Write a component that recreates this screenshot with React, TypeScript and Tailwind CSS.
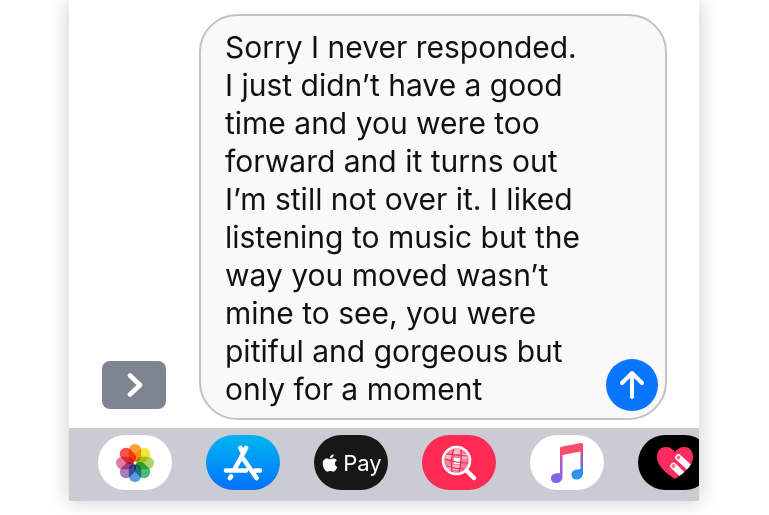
import { FaApple } from "react-icons/fa";

const message = [
  "Sorry I never responded.",
  "I just didn’t have a good",
  "time and you were too",
  "forward and it turns out",
  "I’m still not over it. I liked",
  "listening to music but the",
  "way you moved wasn’t",
  "mine to see, you were",
  "pitiful and gorgeous but",
  "only for a moment",
].join("\n");

const petals = ["#fba03a", "#f2e838", "#aed46a", "#4cbb7c", "#559fe0", "#ac7abf", "#e07ca6", "#fa5546"];

function PhotosIcon() {
  return (
    <svg width="40" height="40" viewBox="-20 -20 40 40" aria-hidden="true">
      {petals.map((fill, i) => (
        <rect
          key={fill}
          x="-6.2"
          y="-19"
          width="12.4"
          height="18"
          rx="6.2"
          fill={fill}
          transform={`rotate(${i * 45})`}
          className="mix-blend-multiply"
        />
      ))}
      <circle r="1.4" fill="white" />
    </svg>
  );
}

function AppStoreIcon() {
  return (
    <svg width="40" height="36" viewBox="0 0 40 36" fill="none" stroke="white" strokeWidth="4.6" strokeLinecap="round" aria-hidden="true">
      <path d="M17.500 3 20 8M23 3 12 23.500M3 25.500H23M32 25.500H37M20.500 14 33.500 33M8 31.500 7 33" />
    </svg>
  );
}

function ImageSearchIcon() {
  return (
    <svg width="36" height="36" viewBox="0 0 36 36" fill="none" aria-hidden="true">
      <circle cx="15.5" cy="15.5" r="12.5" fill="#ff7f98" />
      <path d="M12 4h7v5h-7zM5 9h6v5H5zM20 9h6v5h-6zM5 20h6v5H5zM12 20h7v5h-7z" fill="#ffb5c3" />
      <path d="M13 13h6v6h-6z" fill="white" />
      <g stroke="#e02850" strokeWidth="1.1">
        <path d="M13 3.500Q9 15 11 27M20 4.500Q21 15 18 27.500M5 9q10 1 21 2M3.500 14q12 4 24 4M5 21q9 3 19 3" />
      </g>
      <circle cx="15.5" cy="15.5" r="13.5" stroke="white" strokeWidth="2.6" />
      <path d="M25.500 25.500 33 33" stroke="white" strokeWidth="4.5" strokeLinecap="round" />
    </svg>
  );
}

function MusicIcon() {
  return (
    <svg width="34" height="42" viewBox="0 0 34 42" aria-hidden="true">
      <defs>
        <linearGradient id="leftStem" x1="0" y1="0" x2="0" y2="1">
          <stop offset="0.2" stopColor="#e25080" />
          <stop offset="0.5" stopColor="#a05ad0" />
          <stop offset="1" stopColor="#7766ff" />
        </linearGradient>
        <linearGradient id="rightStem" x1="0" y1="0" x2="0" y2="1">
          <stop offset="0.15" stopColor="#e84e80" />
          <stop offset="0.5" stopColor="#7a60d8" />
          <stop offset="0.85" stopColor="#2898ef" />
        </linearGradient>
      </defs>
      <path d="M10 5v26l-4.500.5C2 32 1 34 1 36.500 1 39.500 3 41 6 41c4 0 6.500-2.500 6.500-6.500V13z" fill="url(#leftStem)" />
      <path d="M33 2v29c0 4-2.500 6.500-6.500 6.500-3 0-5-1.500-5-4.500 0-3.500 2-5 5.500-5.500l3.500-.5V9z" fill="url(#rightStem)" />
      <path d="M10 6.500Q10 5 11.500 4.700L31 1q2-.4 2 1.500V9l-20.500 4H10z" fill="#fa4c69" />
    </svg>
  );
}

function DigitalTouchIcon() {
  return (
    <svg width="38" height="34" viewBox="0 0 38 34" aria-hidden="true">
      <defs>
        <clipPath id="heart">
          <path d="M19 33C13 29 1 21 1 11 1 4 5 1 10 1c4 0 7 2 9 5 2-3 5-5 9-5 5 0 9 3 9 10 0 10-12 18-18 22z" />
        </clipPath>
      </defs>
      <g clipPath="url(#heart)">
        <path d="M0 0h38v34H0z" fill="#ff2d5f" />
        <g stroke="white" strokeWidth="6.4" strokeLinecap="round">
          <path d="M17.500 20 30 32M22.500 11.500 36 24" />
        </g>
        <g fill="#ff6f8e">
          <circle cx="17.500" cy="20" r="2" />
          <circle cx="22.500" cy="11.500" r="2" />
        </g>
      </g>
    </svg>
  );
}

const appButton = "flex h-[55px] w-[74px] shrink-0 items-center justify-center rounded-[28px]";

export default function App() {
  return (
    <div className="overflow-hidden bg-white pb-[14px] font-['Inter','Liberation_Sans',sans-serif]">
      <main className="mr-[70px] ml-[69px] bg-white shadow-[0_0_20px_rgba(0,0,0,0.2)]">
        <form className="flex items-end pt-[14px] pr-8 pb-2 pl-[33px]" onSubmit={(e) => e.preventDefault()}>
          <button
            type="button"
            aria-label="Show apps"
            className="mr-[33px] mb-[11px] flex h-12 w-16 shrink-0 items-center justify-center rounded-lg bg-[#7c8590]"
          >
            <svg width="18" height="26" viewBox="0 0 18 26" fill="none" stroke="white" strokeWidth="4.6" strokeLinecap="round" strokeLinejoin="round" aria-hidden="true">
              <path d="M5 3.500 15 13 5 22.500" />
            </svg>
          </button>
          <div className="flex min-w-0 flex-1 items-end rounded-[38px] border-2 border-[#c2c2c6] bg-[#f9f9f9] pl-6">
            <textarea
              aria-label="Message"
              rows={10}
              defaultValue={message}
              spellCheck={false}
              className="mt-3 mb-[10px] block min-w-0 flex-1 resize-none overflow-hidden bg-transparent text-[30px] leading-[38px] text-[#111] outline-none"
            />
            <button
              type="submit"
              aria-label="Send"
              className="mr-[7px] mb-[7px] flex size-[52px] shrink-0 items-center justify-center rounded-full bg-[#0876fb]"
            >
              <svg width="26" height="30" viewBox="0 0 26 30" fill="none" stroke="white" strokeWidth="4" strokeLinecap="round" strokeLinejoin="round" aria-hidden="true">
                <path d="M13 27V3M3 13 13 3l10 10" />
              </svg>
            </button>
          </div>
        </form>
        <nav aria-label="Apps" className="flex gap-[34px] overflow-hidden bg-[#cbccd3] pt-[7px] pb-[11px] pl-[29px]">
          <button type="button" aria-label="Photos" className={`${appButton} bg-white`}>
            <PhotosIcon />
          </button>
          <button type="button" aria-label="App Store" className={`${appButton} bg-linear-to-b from-[#08b5f0] to-[#0870fa]`}>
            <AppStoreIcon />
          </button>
          <button type="button" aria-label="Apple Pay" className={`${appButton} gap-[3px] bg-[#171717] text-white`}>
            <FaApple size={20} aria-hidden="true" />
            <span className="text-[22px] leading-6">Pay</span>
          </button>
          <button type="button" aria-label="Image search" className={`${appButton} bg-[#ff2b55]`}>
            <ImageSearchIcon />
          </button>
          <button type="button" aria-label="Music" className={`${appButton} bg-white`}>
            <MusicIcon />
          </button>
          <button type="button" aria-label="Digital Touch" className={`${appButton} bg-black`}>
            <DigitalTouchIcon />
          </button>
        </nav>
      </main>
    </div>
  );
}
